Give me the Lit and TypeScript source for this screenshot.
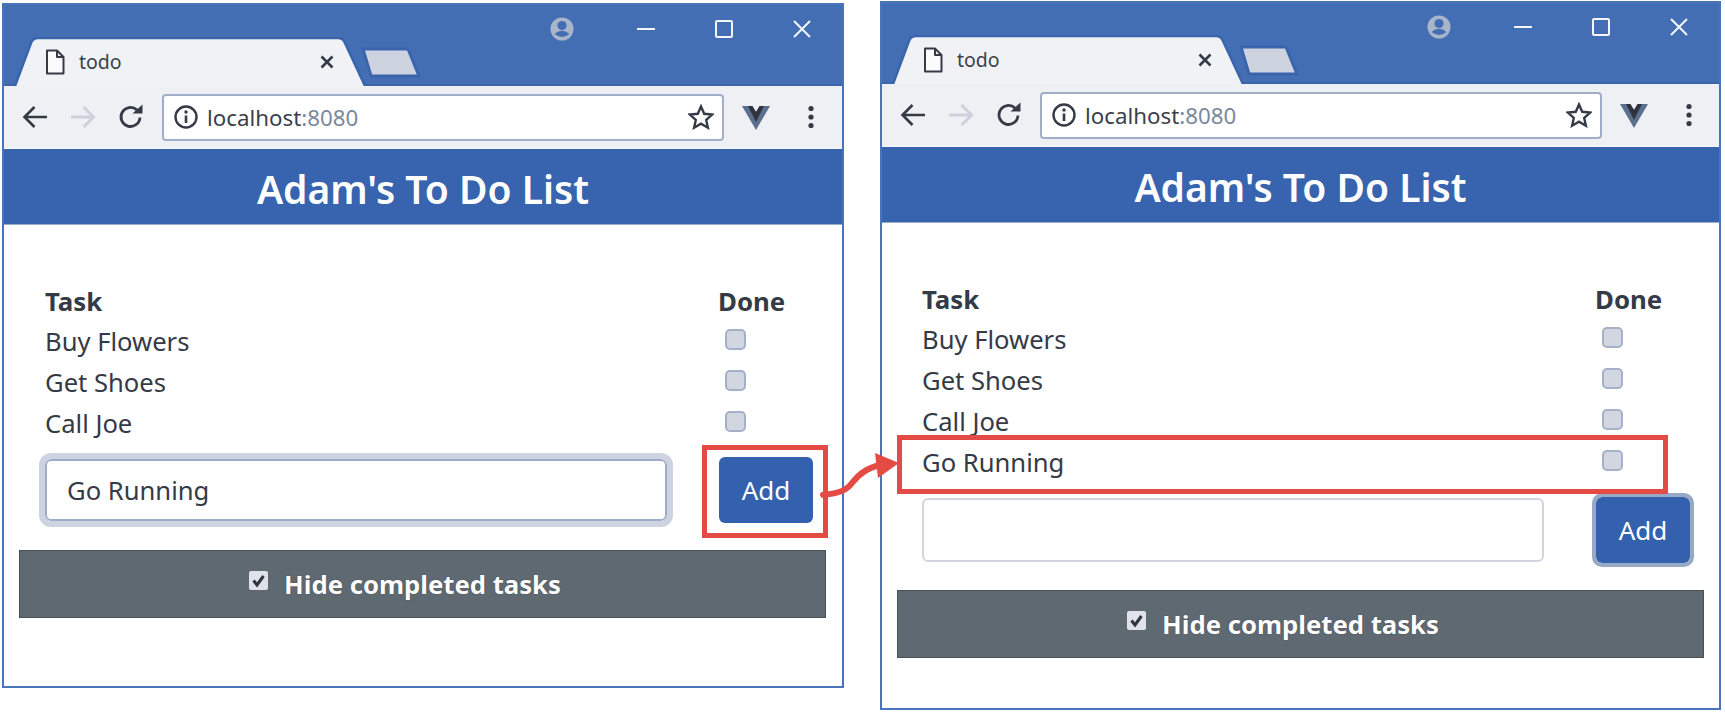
import { LitElement, html, css } from "lit";
import { customElement, property } from "lit/decorators.js";

@customElement("browser-window")
class BrowserWindow extends LitElement {
  @property({ type: Array }) tasks: string[] = [];
  @property() value = "";
  @property({ type: Boolean }) addFocus = false;
  @property({ type: Boolean }) inputFocus = false;

  static styles = css`
    :host {
      display: block;
      box-sizing: border-box;
      border: 2px solid #4a74b9;
      background: #fff;
      font-family: "Noto Sans", "Open Sans", sans-serif;
      color: #343a46;
    }
    .titlebar {
      height: 81px;
      background: #436eb4;
      position: relative;
      border-bottom: 2px solid #3b66ae;
      box-sizing: border-box;
    }
    .tab {
      position: absolute;
      left: 9px;
      bottom: -2px;
      width: 356px;
      height: 49px;
      display: flex;
      align-items: center;
      padding: 0 0 0 32px;
      box-sizing: border-box;
    }
    .tab-shape {
      position: absolute;
      inset: 0;
      width: 100%;
      height: 100%;
    }
    .tab > :not(.tab-shape) { position: relative; }
    .tab-title {
      font-size: 19.5px;
      margin-left: 14px;
      flex: 1;
      color: #3a3f4b;
    }
    .tab-close { margin-right: 35px; display: block; }
    .new-tab {
      position: absolute;
      left: 355px;
      top: 41px;
    }
    .caption {
      position: absolute;
      top: 12px;
      right: 1px;
      display: flex;
      align-items: center;
    }
    .avatar { margin-right: 33px; display: block; }
    .win-btn { width: 78px; display: flex; justify-content: center; }
    .toolbar {
      height: 63px;
      background: #eef0f3;
      display: flex;
      align-items: center;
      box-sizing: border-box;
      padding: 0 0 0 18px;
      border-bottom: 1px solid #f7f8fa;
    }
    .nav { display: block; margin-right: 22px; }
    .nav.last { margin-right: 18px; }
    .omnibox {
      width: 562px;
      height: 47px;
      background: #fff;
      border: 2px solid #a0aec8;
      border-radius: 4px;
      box-sizing: border-box;
      display: flex;
      align-items: center;
      padding: 0 8px 0 10px;
      font-size: 22.3px;
    }
    .host { margin-left: 9px; color: #3a3f4b; flex: 1; }
    .port { color: #7b879b; }
    .vue { margin-left: 18px; display: block; }
    .dots { margin-left: 38px; display: block; }
    .page-head {
      background: #3763af;
      height: 76px;
      color: #fff;
      font-size: 39px;
      font-weight: 600;
      display: flex;
      align-items: center;
      justify-content: center;
      border-bottom: 1px solid #9aaccb;
      box-sizing: border-box;
      padding-top: 4px;
    }
    .content { padding: 55px 15px 0 15px; box-sizing: border-box; }
    .rows { padding: 0 25px 0 26px; }
    :host(.right) .rows { padding-left: 25px; }
    .row {
      height: 41px;
      display: grid;
      grid-template-columns: 1fr 84px;
      align-items: center;
      font-size: 25.6px;
    }
    .head { font-weight: 700; font-size: 25.8px; }
    .check {
      display: block;
      width: 21px;
      height: 21px;
      border: 2px solid #a5b1c8;
      border-radius: 5px;
      background: #d2d6e0;
      box-sizing: border-box;
      margin-left: 7px;
      margin-bottom: 4px;
    }
    .form {
      display: grid;
      grid-template-columns: 1fr 94px;
      column-gap: 52px;
      align-items: center;
      margin-top: 13px;
      padding-right: 3px;
    }
    :host(.right) .form { margin-top: 14px; }
    .input {
      height: 64px;
      box-sizing: border-box;
      border: 2px solid #d0d5e1;
      border-radius: 6px;
      display: flex;
      align-items: center;
      padding: 0 20px;
      font-size: 25.6px;
      width: 622px;
    }
    .input.focus {
      height: 62px;
      border-color: #9dacc9;
      outline: 6px solid #cdd3e0;
    }
    .add {
      height: 66px;
      width: 94px;
      background: #3461ae;
      color: #fff;
      border-radius: 6px;
      display: flex;
      align-items: center;
      justify-content: center;
      font-size: 26px;
    }
    .add.focus { outline: 4px solid #98a9c6; }
    .bar {
      margin-top: 27px;
      height: 68px;
      width: 807px;
      background: #5f6971;
      color: #fff;
      border: 1px solid #4a5058;
      box-sizing: border-box;
      display: flex;
      align-items: center;
      justify-content: center;
      padding-right: 35px;
      font-size: 25.7px;
      font-weight: 700;
      gap: 16px;
    }
    .bar span { text-shadow: 0 0 1px #2f3540; }
    .box {
      width: 19px;
      height: 19px;
      background: #dfe2e8;
      border-radius: 2px;
      display: block;
      margin-top: -7px;
    }
  `;

  render() {
    const ink = "#343a46";
    return html`
      <div class="titlebar">
        <div class="tab">
          <svg class="tab-shape" viewBox="0 0 356 49" preserveAspectRatio="none">
            <path d="M0 49 H2 L18 6 Q20 1 25 1 H325 Q330 1 332 6 L352 49 H356" fill="#f1f2f5" stroke="#3a65ad" stroke-width="2.5"/>
          </svg>
          <svg width="20" height="26" viewBox="0 0 20 26">
            <path d="M2 1.5 H12 L18.5 8 V24.5 H2 Z M12 1.5 V8 H18.5" fill="#fbfbfc" stroke="${ink}" stroke-width="2" stroke-linejoin="round"/>
          </svg>
          <span class="tab-title">todo</span>
          <svg class="tab-close" width="14" height="14" viewBox="0 0 14 14">
            <path d="M1.5 1.5 L12.5 12.5 M12.5 1.5 L1.5 12.5" stroke="${ink}" stroke-width="2.6"/>
          </svg>
        </div>
        <svg class="new-tab" width="64" height="33" viewBox="0 0 64 33">
          <path d="M4 3 H49 L60 30 H12 Z" fill="#ccd2de" stroke="#3a65ad" stroke-width="3" stroke-linejoin="round"/>
        </svg>
        <div class="caption">
          <svg class="avatar" width="24" height="24" viewBox="0 0 24 24">
            <circle cx="12" cy="12" r="11.5" fill="#a9b5c9"/>
            <circle cx="12" cy="8.5" r="4.6" fill="#436eb4"/>
            <path d="M4.5 17 Q12 10.5 19.5 17 Q12 23 4.5 17Z" fill="#436eb4"/>
          </svg>
          <div class="win-btn"><svg width="20" height="20" viewBox="0 0 20 20"><path d="M1 10 H19" stroke="#f4f6fa" stroke-width="2"/></svg></div>
          <div class="win-btn"><svg width="20" height="20" viewBox="0 0 20 20"><rect x="2" y="2" width="16" height="16" rx="1" fill="none" stroke="#f4f6fa" stroke-width="2"/></svg></div>
          <div class="win-btn"><svg width="20" height="20" viewBox="0 0 20 20"><path d="M2 2 L18 18 M18 2 L2 18" stroke="#f4f6fa" stroke-width="2"/></svg></div>
        </div>
      </div>
      <div class="toolbar">
        <svg class="nav" width="26" height="24" viewBox="0 0 26 24"><path d="M25 12 H3 M12.5 2 L2.5 12 L12.5 22" fill="none" stroke="${ink}" stroke-width="2.6"/></svg>
        <svg class="nav" width="26" height="24" viewBox="0 0 26 24"><path d="M1 12 H23 M13.5 2 L23.5 12 L13.5 22" fill="none" stroke="#ccd1dc" stroke-width="3"/></svg>
        <svg class="nav last" width="26" height="26" viewBox="0 0 26 26"><path d="M22 13.5 A9.5 9.5 0 1 1 19 6" fill="none" stroke="${ink}" stroke-width="2.8"/><path d="M14.5 9.5 H24.5 V0.5 Z" fill="${ink}"/></svg>
        <div class="omnibox">
          <svg width="24" height="24" viewBox="0 0 24 24"><circle cx="12" cy="12" r="10.5" fill="none" stroke="${ink}" stroke-width="2.4"/><path d="M12 10.5 V18" stroke="${ink}" stroke-width="2.6"/><circle cx="12" cy="7" r="1.7" fill="${ink}"/></svg>
          <span class="host">localhost<span class="port">:8080</span></span>
          <svg width="26" height="26" viewBox="0 0 26 26"><path d="M13 2.5 L16.2 9.8 L24.2 10.6 L18.2 15.9 L19.9 23.7 L13 19.7 L6.1 23.7 L7.8 15.9 L1.8 10.6 L9.8 9.8 Z" fill="none" stroke="${ink}" stroke-width="2.4" stroke-linejoin="miter"/></svg>
        </div>
        <svg class="vue" width="28" height="25" viewBox="0 0 28 25"><path d="M0 1 H10 L14 7 L18 1 H28 L14 25 Z" fill="#5b6f8e"/><path d="M6 1 H10.5 L14 7 L17.5 1 H22 L14 17 Z" fill="#2f3340"/></svg>
        <svg class="dots" width="6" height="24" viewBox="0 0 6 24"><circle cx="3" cy="3.5" r="2.6" fill="${ink}"/><circle cx="3" cy="12" r="2.6" fill="${ink}"/><circle cx="3" cy="20.5" r="2.6" fill="${ink}"/></svg>
      </div>
      <div class="page-head">Adam's To Do List</div>
      <div class="content">
        <div class="rows">
          <div class="row head"><span>Task</span><span>Done</span></div>
          ${this.tasks.map((t) => html`<div class="row"><span>${t}</span><span class="check"></span></div>`)}
          <div class="form">
            <div class="input ${this.inputFocus ? "focus" : ""}">${this.value}</div>
            <div class="add ${this.addFocus ? "focus" : ""}">Add</div>
          </div>
        </div>
        <div class="bar">
          <svg class="box" viewBox="0 0 19 19"><path d="M4.5 9.5 L8 14 L14.5 5" fill="none" stroke="#2f3540" stroke-width="3"/></svg>
          <span>Hide completed tasks</span>
        </div>
      </div>
    `;
  }
}

@customElement("app-root")
class AppRoot extends LitElement {
  static styles = css`
    :host {
      display: block;
      position: relative;
      width: 1725px;
      height: 713px;
      background: #fff;
      overflow: hidden;
    }
    .stage {
      display: flex;
      align-items: flex-start;
      padding-left: 2px;
      gap: 36px;
    }
    .left { width: 842px; height: 685px; margin-top: 3px; }
    .right { width: 841px; height: 709px; margin-top: 1px; }
    .callout {
      position: absolute;
      border: 5px solid #e44b45;
      box-sizing: border-box;
    }
    .callout.a { left: 702px; top: 445px; width: 126px; height: 93px; }
    .callout.b { left: 897px; top: 435px; width: 771px; height: 59px; }
    .arrow { position: absolute; left: 815px; top: 445px; }
  `;
  render() {
    return html`
      <div class="stage">
        <browser-window class="left" .tasks=${["Buy Flowers", "Get Shoes", "Call Joe"]} value="Go Running" inputFocus></browser-window>
        <browser-window class="right" .tasks=${["Buy Flowers", "Get Shoes", "Call Joe", "Go Running"]} addFocus></browser-window>
      </div>
      <div class="callout a"></div>
      <div class="callout b"></div>
      <svg class="arrow" width="90" height="70" viewBox="0 0 90 70">
        <path d="M8 50 C24 48 31 46 37 38 C44 29 52 22 66 20" fill="none" stroke="#e44b45" stroke-width="6" stroke-linecap="round"/>
        <path d="M60 8 L84 18 L63 33 Z" fill="#e44b45"/>
      </svg>
    `;
  }
}
